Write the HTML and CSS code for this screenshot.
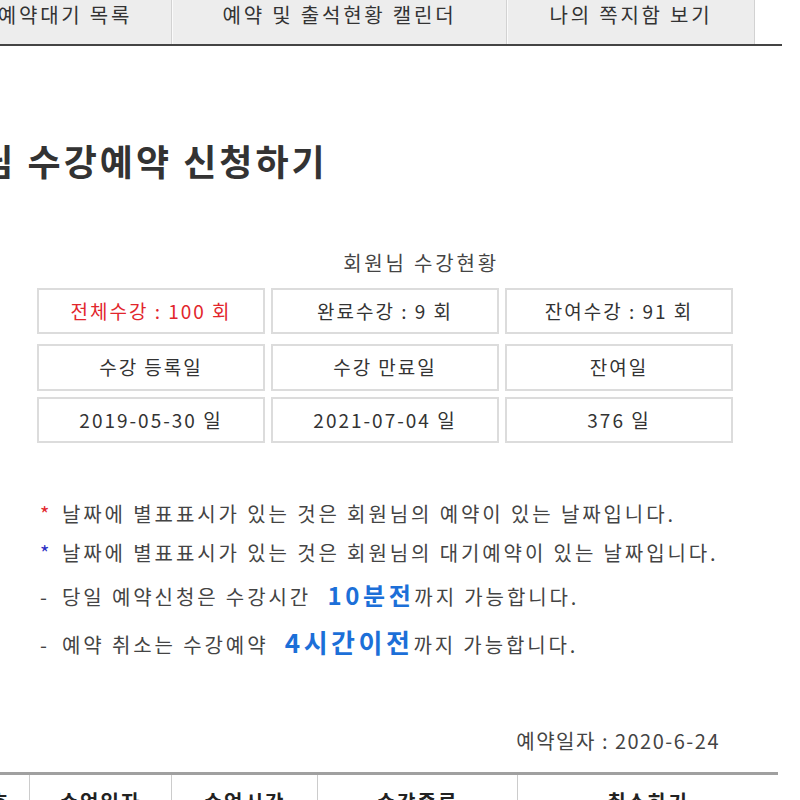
FILE: index.html
```html
<!DOCTYPE html>
<html>
<head>
    <meta charset="utf-8">
    <meta name="viewport" content="width=device-width, initial-scale=1">
    <link rel="stylesheet" href="styles.css">
</head>

<body>
    <div class="tabBar">
        <a class="tab tabFirst" href="#">예약대기 목록</a>
        <a class="tab tabSecond" href="#">예약 및 출석현황 캘린더</a>
        <a class="tab tabThird" href="#">나의 쪽지함 보기</a>
    </div>

    <h2 class="pageTitle">회원님 수강예약 신청하기</h2>

    <div class="statusBox">
        <p class="statusTitle">회원님 수강현황</p>
        <div class="statRow statTop">
            <div class="statCell statRed">전체수강 : 100 회</div>
            <div class="statCell">완료수강 : 9 회</div>
            <div class="statCell">잔여수강 : 91 회</div>
        </div>
        <div class="statRow statMid">
            <div class="statCell">수강 등록일</div>
            <div class="statCell">수강 만료일</div>
            <div class="statCell">잔여일</div>
        </div>
        <div class="statRow">
            <div class="statCell">2019-05-30 일</div>
            <div class="statCell">2021-07-04 일</div>
            <div class="statCell">376 일</div>
        </div>
    </div>

    <ul class="noteList">
        <li class="note"><span class="mark markRed">*</span>날짜에 별표표시가 있는 것은 회원님의 예약이 있는 날짜입니다.</li>
        <li class="note"><span class="mark markBlue">*</span>날짜에 별표표시가 있는 것은 회원님의 대기예약이 있는 날짜입니다.</li>
        <li class="note noteBig"><span class="mark">-</span>당일 예약신청은 수강시간 <b class="hot">10분전</b>까지 가능합니다.</li>
        <li class="note noteBig"><span class="mark">-</span>예약 취소는 수강예약 <b class="hot hotBig">4시간이전</b>까지 가능합니다.</li>
    </ul>

    <p class="reserveDate">예약일자 : 2020-6-24</p>

    <div class="listHead">
        <div class="headCell headNo">번호</div>
        <div class="headCell headA">수업일자</div>
        <div class="headCell headB">수업시간</div>
        <div class="headCell headC">수강종류</div>
        <div class="headCell headD">취소하기</div>
    </div>
</body>
</html>
```

FILE: styles.css
```css
body {
    margin: 0;
    overflow: hidden;
    background: #ffffff;
    color: #333333;
    font-family: "Noto Sans CJK KR", "Noto Sans", sans-serif;
}

.tabBar {
    display: flex;
    width: 782px;
    height: 44px;
    border-bottom: 2px solid #444444;
}

.tab {
    display: block;
    box-sizing: border-box;
    height: 44px;
    padding-top: 1px;
    background: #ededed;
    border-left: 1px solid #fafafa;
    border-right: 1px solid #d2d2d2;
    color: #333333;
    font-size: 20px;
    line-height: 28px;
    letter-spacing: 2.8px;
    text-align: center;
    text-decoration: none;
}

.tabFirst {
    width: 214px;
    margin-left: -42px;
}

.tabSecond {
    width: 335px;
}

.tabThird {
    width: 248px;
}

.pageTitle {
    margin: 94px 0 0 -92px;
    font-size: 36px;
    line-height: 40px;
    font-weight: bold;
    color: #333333;
    letter-spacing: 3px;
}

.statusBox {
    margin: 70px 0 0 37px;
    width: 696px;
}

.statusTitle {
    margin: 0 0 12px 0;
    padding-left: 72px;
    font-size: 20px;
    line-height: 26px;
    text-align: center;
    color: #444444;
    letter-spacing: 2.8px;
}

.statRow {
    display: grid;
    grid-template-columns: 228px 228px 228px;
    column-gap: 6px;
    margin-bottom: 6px;
}

.statTop {
    margin-bottom: 10px;
}

.statCell {
    box-sizing: border-box;
    height: 46px;
    border: 2px solid #dcdcdc;
    font-size: 19px;
    line-height: 42px;
    text-align: center;
    color: #333333;
    letter-spacing: 2px;
}

.statMid .statCell {
    height: 47px;
}

.statRed {
    color: #e2262c;
}

.noteList {
    list-style: none;
    margin: 51px 0 0 40px;
    padding: 0;
}

.note {
    font-size: 20px;
    line-height: 39px;
    color: #444444;
    letter-spacing: 2.9px;
}

.noteBig {
    line-height: 46px;
}

.noteBig + .noteBig {
    line-height: 44px;
}

.mark {
    display: inline-block;
    width: 22px;
    text-align: left;
}

.markRed {
    color: #e2262c;
}

.markBlue {
    color: #2b2fc4;
}

.hot {
    margin-left: 9px;
    font-size: 24px;
    font-weight: bold;
    color: #1c6fd8;
    letter-spacing: 3.6px;
}

.hotBig {
    font-size: 26px;
    letter-spacing: 3.5px;
}

.reserveDate {
    width: 720px;
    margin: 61px 0 0 0;
    font-size: 20px;
    line-height: 26px;
    text-align: right;
    color: #444444;
    letter-spacing: 1.5px;
}

.listHead {
    display: flex;
    width: 778px;
    margin-top: 18px;
    border-top: 3px solid #a0a0a0;
}

.headCell {
    box-sizing: border-box;
    height: 40px;
    padding-top: 14px;
    border-right: 1px solid #cccccc;
    font-size: 20px;
    line-height: 26px;
    font-weight: bold;
    text-align: center;
    color: #222222;
    letter-spacing: 2px;
}

.headNo {
    width: 80px;
    margin-left: -50px;
}

.headA {
    width: 142px;
}

.headB {
    width: 146px;
}

.headC {
    width: 200px;
}

.headD {
    flex: 1;
    border-right: none;
}
```
